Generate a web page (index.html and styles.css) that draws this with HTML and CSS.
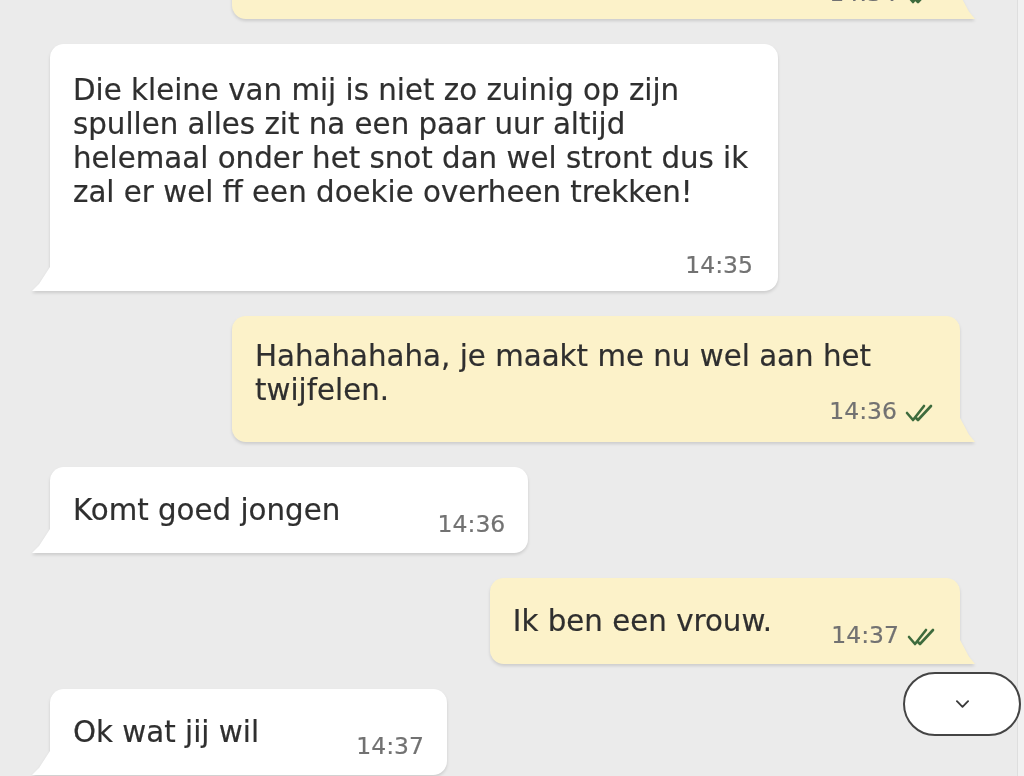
FILE: index.html
```html
<!DOCTYPE html>
<html lang="nl">
<head>
<meta charset="utf-8">
<title>Chat</title>
<link rel="stylesheet" href="styles.css">
</head>
<body>
<div class="screen">
  <main class="chat">
    <div class="bubble bubble--out bubble--wrap bubble--first">
      <div class="meta">
        <span class="time">14:34</span>
        <svg class="ticks" viewBox="0 0 30 20" aria-hidden="true"><path d="M2 10 L8 17 L19 3 M11 15 L13 17 L26 3"/></svg>
      </div>
    </div>

    <div class="bubble bubble--in bubble--wrap bubble--tall">
      <p class="text">Die kleine van mij is niet zo zuinig op zijn spullen alles zit na een paar uur altijd helemaal onder het snot dan wel stront dus ik zal er wel ff een doekie overheen trekken!</p>
      <div class="meta meta--below">
        <span class="time">14:35</span>
      </div>
    </div>

    <div class="bubble bubble--out bubble--wrap bubble--mid">
      <p class="text">Hahahahaha, je maakt me nu wel aan het twijfelen.</p>
      <div class="meta meta--overlap">
        <span class="time">14:36</span>
        <svg class="ticks" viewBox="0 0 30 20" aria-hidden="true"><path d="M2 10 L8 17 L19 3 M11 15 L13 17 L26 3"/></svg>
      </div>
    </div>

    <div class="bubble bubble--in bubble--row">
      <p class="text">Komt goed jongen</p>
      <div class="meta">
        <span class="time">14:36</span>
      </div>
    </div>

    <div class="bubble bubble--out bubble--row">
      <p class="text">Ik ben een vrouw.</p>
      <div class="meta">
        <span class="time">14:37</span>
        <svg class="ticks" viewBox="0 0 30 20" aria-hidden="true"><path d="M2 10 L8 17 L19 3 M11 15 L13 17 L26 3"/></svg>
      </div>
    </div>

    <div class="bubble bubble--in bubble--row">
      <p class="text">Ok wat jij wil</p>
      <div class="meta">
        <span class="time">14:37</span>
      </div>
    </div>

    <button class="scroll-down" aria-label="Naar beneden">
      <svg viewBox="0 0 14 8" aria-hidden="true"><path d="M1 1 L7 7 L13 1"/></svg>
    </button>
  </main>
  <div class="edge"></div>
</div>
</body>
</html>
```

FILE: styles.css
```css
html, body {
  margin: 0;
  padding: 0;
}

body {
  background: #ebebeb;
  font-family: "DejaVu Sans", "Noto Sans", sans-serif;
  color: #2f2f2f;
  width: 1024px;
  height: 776px;
  overflow: hidden;
}

.screen {
  display: flex;
  height: 776px;
  overflow: hidden;
}

.chat {
  position: relative;
  flex: 1;
  display: flex;
  flex-direction: column;
  gap: 25px;
  margin-top: -40px;
}

.edge {
  width: 6px;
  border-left: 1px solid #dedede;
  background: #f1f1f1;
}

.bubble {
  position: relative;
  box-sizing: border-box;
  padding: 26px 23px 15px 23px;
  border-radius: 14px;
  font-size: 29.3px;
  line-height: 34px;
  -webkit-text-stroke: 0.2px #2f2f2f;
  filter: drop-shadow(0 2px 1.5px rgba(0, 0, 0, 0.13));
}

.bubble::before {
  content: "";
  position: absolute;
  bottom: 0;
  width: 18px;
  height: 24px;
}

.bubble--in {
  align-self: flex-start;
  margin-left: 50px;
  background: #ffffff;
  border-bottom-left-radius: 0;
}

.bubble--in::before {
  left: -18px;
  background: #ffffff;
  clip-path: polygon(100% 0, 100% 100%, 0 100%, 40% 70%);
}

.bubble--out {
  align-self: flex-end;
  margin-right: 57px;
  background: #fcf2c9;
  border-bottom-right-radius: 0;
}

.bubble--out::before {
  right: -15px;
  width: 15px;
  background: #fcf2c9;
  clip-path: polygon(0 0, 0 100%, 100% 100%, 60% 70%);
}

.text {
  margin: 0;
}

.bubble--row {
  display: flex;
  align-items: flex-start;
}

.bubble--row .text {
  white-space: nowrap;
}

.bubble--row .meta {
  margin-top: 17px;
}

.bubble--wrap {
  width: 728px;
  padding-right: 25px;
  display: flex;
  flex-direction: column;
}

.bubble--first {
  padding-top: 19px;
  padding-bottom: 12px;
}

.bubble--tall {
  padding-top: 29px;
  padding-bottom: 12px;
}

.bubble--mid {
  padding-top: 23px;
  padding-bottom: 17px;
}

.meta {
  display: flex;
  align-items: center;
  justify-content: flex-end;
  gap: 8px;
  width: 165px;
  flex-shrink: 0;
  font-size: 23.5px;
  line-height: 28px;
  color: #727272;
  -webkit-text-stroke: 0.2px #727272;
}

.bubble--wrap .meta {
  align-self: flex-end;
}

.meta--below {
  margin-top: 42px;
}

.meta--overlap {
  margin-top: -10px;
}

.ticks {
  width: 30px;
  height: 20px;
  margin-top: 4px;
  fill: none;
  stroke: #3e6b3d;
  stroke-width: 2.6;
  stroke-linecap: round;
  stroke-linejoin: round;
}

.scroll-down {
  position: absolute;
  right: -4px;
  top: 712px;
  width: 118px;
  height: 64px;
  box-sizing: border-box;
  border: 2px solid #444444;
  border-radius: 32px;
  background: #ffffff;
  padding: 0;
  display: flex;
  align-items: center;
  justify-content: center;
}

.scroll-down svg {
  width: 13px;
  height: 8px;
  fill: none;
  stroke: #3a3a3a;
  stroke-width: 2;
  stroke-linecap: round;
  stroke-linejoin: round;
}
```
